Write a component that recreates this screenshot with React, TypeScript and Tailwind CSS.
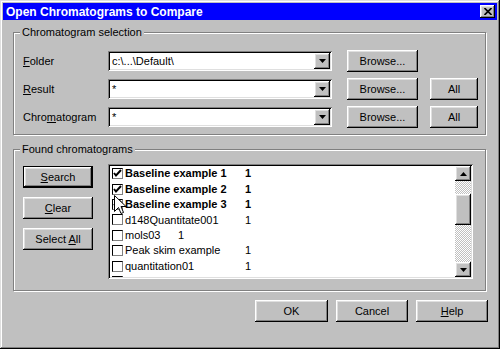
import React from 'react';

const raised =
  'bg-[#c0c0c0] shadow-[inset_-1px_-1px_#000,inset_1px_1px_#fff,inset_-2px_-2px_#808080,inset_2px_2px_#dfdfdf]';
const sunken =
  'bg-white shadow-[inset_1px_1px_#808080,inset_-1px_-1px_#fff,inset_2px_2px_#000,inset_-2px_-2px_#dfdfdf]';

const Btn: React.FC<{ className?: string; children: React.ReactNode; isDefault?: boolean }> = ({
  className = '',
  children,
  isDefault,
}) => (
  <div className={`${className} ${isDefault ? 'border border-black' : ''} flex`}>
    <div className={`flex-1 flex items-center justify-center ${raised}`}>
      <span>{children}</span>
    </div>
  </div>
);

const U: React.FC<{ children: React.ReactNode }> = ({ children }) => (
  <span className="underline underline-offset-[1px] decoration-1">{children}</span>
);

const Arrow: React.FC<{ up?: boolean }> = ({ up }) => (
  <svg width="7" height="4" viewBox="0 0 7 4">
    <path d={up ? 'M3.5 0 L7 4 L0 4 Z' : 'M0 0 L7 0 L3.5 4 Z'} fill="#000" />
  </svg>
);

const Combo: React.FC<{ value: string }> = ({ value }) => (
  <div className={`w-[224px] h-[20px] ${sunken} flex items-center p-[2px]`}>
    <span className="flex-1 pl-[2px] leading-none">{value}</span>
    <div className={`w-[16px] h-[16px] flex items-center justify-center ${raised}`}>
      <Arrow />
    </div>
  </div>
);

const Group: React.FC<{ title: string; className?: string; children: React.ReactNode }> = ({
  title,
  className = '',
  children,
}) => (
  <div className={`relative border border-[#808080] shadow-[inset_1px_1px_#fff,1px_1px_#fff] ${className}`}>
    <span className="absolute top-[-8px] left-[6px] px-[2px] bg-[#c0c0c0] leading-[14px]">{title}</span>
    {children}
  </div>
);

type Row = { name: string; num: string; checked?: boolean; bold?: boolean; w: string };

const rows: Row[] = [
  { name: 'Baseline example 1', num: '1', checked: true, bold: true, w: 'w-[122px]' },
  { name: 'Baseline example 2', num: '1', checked: true, bold: true, w: 'w-[122px]' },
  { name: 'Baseline example 3', num: '1', checked: true, bold: true, w: 'w-[122px]' },
  { name: 'd148Quantitate001', num: '1', w: 'w-[122px]' },
  { name: 'mols03', num: '1', w: 'w-[55px]' },
  { name: 'Peak skim example', num: '1', w: 'w-[122px]' },
  { name: 'quantitation01', num: '1', w: 'w-[122px]' },
  { name: 'quantitation02', num: '1', w: 'w-[122px]' },
];

const Check: React.FC<{ checked?: boolean }> = ({ checked }) => (
  <div className="w-[11px] h-[11px] bg-white border border-t-black border-l-black border-r-[#808080] border-b-[#808080] flex items-center justify-center shrink-0">
    {checked && (
      <svg width="9" height="9" viewBox="0 0 9 9">
        <path d="M1 4 L3 6.5 L8 1" stroke="#000" strokeWidth="2" fill="none" />
      </svg>
    )}
  </div>
);

export default function App() {
  return (
    <div className="w-[500px] h-[349px] bg-[#c0c0c0] p-[3px] flex flex-col font-['Liberation_Sans',Arial,sans-serif] text-[11px] text-black select-none shadow-[inset_-1px_-1px_#000,inset_1px_1px_#dfdfdf,inset_-2px_-2px_#808080,inset_2px_2px_#fff]">
      {/* Title bar */}
      <div className="h-[17px] bg-[#0000ff] flex items-center justify-between pl-[3px] pr-[2px]">
        <span className="text-white font-bold text-[12px] leading-none">Open Chromatograms to Compare</span>
        <div className={`w-[15px] h-[13px] flex items-center justify-center ${raised}`}>
          <svg width="8" height="7" viewBox="0 0 8 7">
            <path d="M0.5 0 L7.5 7 M7.5 0 L0.5 7" stroke="#000" strokeWidth="1.6" />
          </svg>
        </div>
      </div>

      <div className="flex-1 flex flex-col pl-[10px] pr-[9px]">
        {/* Chromatogram selection */}
        <Group title="Chromatogram selection" className="mt-[12px] mr-[2px] pt-[17px] pl-[9px] pb-[6px]">
          <div className="flex flex-col gap-[6px]">
            <div className="flex items-center h-[22px]">
              <span className="w-[85px]"><U>F</U>older</span>
              <Combo value="c:\...\Default\" />
              <Btn className="ml-[15px] w-[71px] h-[22px]">Browse...</Btn>
            </div>
            <div className="flex items-center h-[22px]">
              <span className="w-[85px]"><U>R</U>esult</span>
              <Combo value="*" />
              <Btn className="ml-[15px] w-[71px] h-[22px]">Browse...</Btn>
              <Btn className="ml-[12px] w-[48px] h-[22px]">All</Btn>
            </div>
            <div className="flex items-center h-[22px]">
              <span className="w-[85px]">Chro<U>m</U>atogram</span>
              <Combo value="*" />
              <Btn className="ml-[15px] w-[71px] h-[22px]">Browse...</Btn>
              <Btn className="ml-[12px] w-[48px] h-[22px]">All</Btn>
            </div>
          </div>
        </Group>

        {/* Found chromatograms */}
        <Group title="Found chromatograms" className="mt-[14px] mr-[2px] h-[142px] pt-[14px] pl-[9px] flex items-start">
          <div className="w-[70px] mt-[2px] flex flex-col gap-[9px]">
            <Btn isDefault className="h-[22px]"><U>S</U>earch</Btn>
            <Btn className="h-[22px]"><U>C</U>lear</Btn>
            <Btn className="h-[22px]">Select <U>A</U>ll</Btn>
          </div>
          <div className={`relative ml-[15px] w-[365px] h-[115px] ${sunken} p-[2px] flex`}>
            <div className="flex-1 overflow-hidden pl-[2px]">
              {rows.map((r) => (
                <div key={r.name} className={`h-[15.4px] flex items-center whitespace-nowrap ${r.bold ? 'font-bold' : ''}`}>
                  <Check checked={r.checked} />
                  <span className={`${r.w} pl-[2px]`}>{r.name}</span>
                  <span>{r.num}</span>
                </div>
              ))}
            </div>
            {/* Scrollbar */}
            <div className="w-[16px] flex flex-col">
              <div className={`h-[15px] flex items-center justify-center ${raised}`}>
                <Arrow up />
              </div>
              <div className="h-[13px] bg-[repeating-conic-gradient(#c0c0c0_0_25%,#ffffff_0_50%)] bg-[length:2px_2px]" />
              <div className={`h-[31px] ${raised}`} />
              <div className="flex-1 bg-[repeating-conic-gradient(#c0c0c0_0_25%,#ffffff_0_50%)] bg-[length:2px_2px]" />
              <div className={`h-[15px] flex items-center justify-center ${raised}`}>
                <Arrow />
              </div>
            </div>
            {/* Mouse pointer */}
            <svg className="absolute left-[6px] top-[31px]" width="13" height="20" viewBox="0 0 13 20">
              <path d="M0.5 0.5 L0.5 16.5 L4.5 12.5 L7 18.5 L9.5 17.5 L7 11.5 L12 11.5 Z" fill="#fff" stroke="#000" strokeWidth="1" />
            </svg>
          </div>
        </Group>

        {/* Dialog buttons */}
        <div className="mt-[9px] flex justify-end gap-[8px]">
          <Btn className="w-[73px] h-[22px]">OK</Btn>
          <Btn className="w-[72px] h-[22px]">Cancel</Btn>
          <Btn className="w-[72px] h-[22px]"><U>H</U>elp</Btn>
        </div>
      </div>
    </div>
  );
}
